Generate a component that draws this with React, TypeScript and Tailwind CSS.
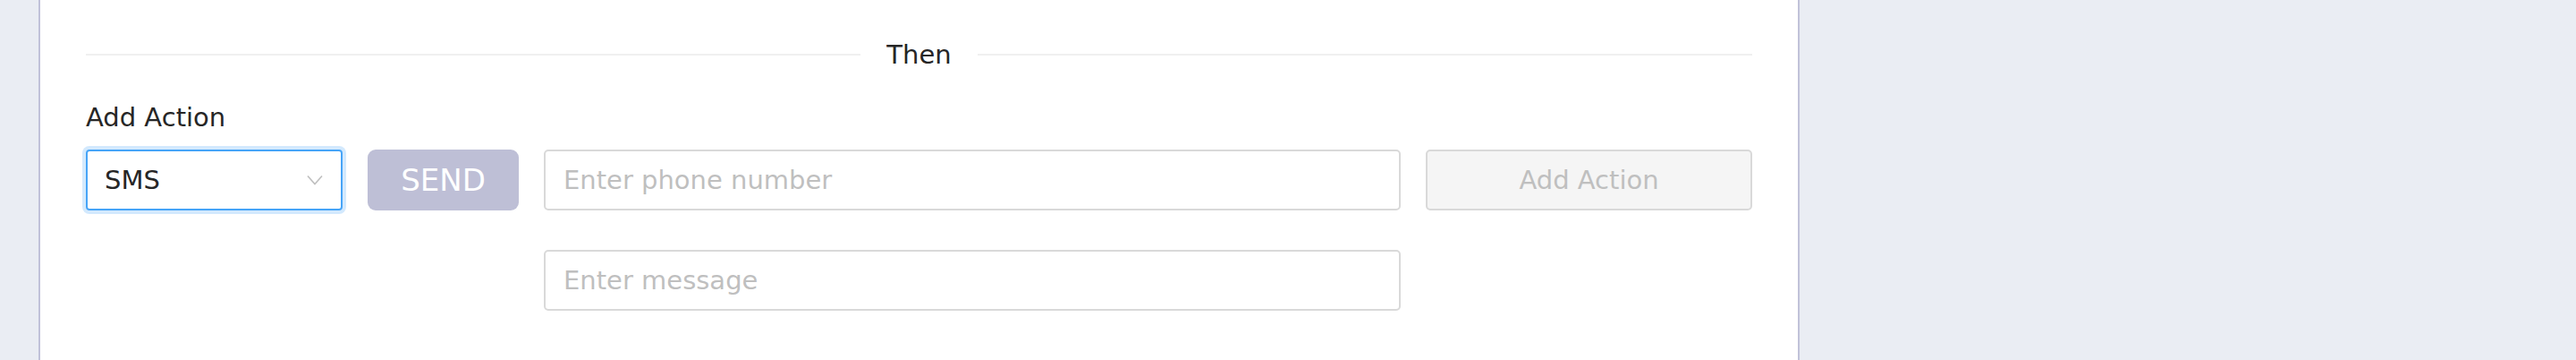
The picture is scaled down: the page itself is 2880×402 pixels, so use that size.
import { useState } from "react";

const font = { fontFamily: '"DejaVu Sans", "Liberation Sans", sans-serif' };

function Chevron() {
  return (
    <svg width="18" height="12" viewBox="0 0 18 12" fill="none">
      <path d="M1 1.5 L9 10.5 L17 1.5" stroke="#bfbfbf" strokeWidth="1.6" />
    </svg>
  );
}

export default function App() {
  const [phone, setPhone] = useState("");
  const [message, setMessage] = useState("");

  return (
    <div className="flex min-h-[402px] w-full bg-[#eaedf3]" style={font}>
      <div className="w-[43px] shrink-0" />

      <div className="w-[1969px] shrink-0 border-x-2 border-[#c1c2d9] bg-white px-[51px] pt-[39px] pb-[40px]">
        {/* divider */}
        <div className="flex h-[44px] items-center">
          <div className="h-[2px] flex-1 bg-[#f0f0f0]" />
          <span className="px-[29px] text-[29px] leading-none text-[#262626]">
            Then
          </span>
          <div className="h-[2px] flex-1 bg-[#f0f0f0]" />
        </div>

        <div className="mt-[34px] text-[29px] leading-[29px] text-[#262626]">
          Add Action
        </div>

        <div className="mt-[21px] grid grid-cols-[287px_169px_1fr_365px] gap-x-[28px] gap-y-[44px]">
          <div className="flex h-[68px] items-center justify-between rounded-[4px] border-2 border-[#46a4f7] pr-[20px] pl-[19px] shadow-[0_0_0_4px_#d3e9fd]">
            <span className="text-[29px] leading-none text-[#262626]">SMS</span>
            <Chevron />
          </div>

          <button className="flex h-[68px] items-center justify-center rounded-[9px] bg-[#bebfd6] text-[34px] leading-none text-white">
            SEND
          </button>

          <input
            value={phone}
            onChange={(e) => setPhone(e.target.value)}
            placeholder="Enter phone number"
            className="h-[68px] w-full rounded-[5px] border-2 border-[#d9d9d9] px-[20px] text-[29px] text-[#262626] outline-none placeholder:text-[#bfbfbf]"
          />

          <button className="flex h-[68px] items-center justify-center rounded-[5px] border-2 border-[#d9d9d9] bg-[#f5f5f5] text-[29px] leading-none text-[#bfbfbf]">
            Add Action
          </button>

          <input
            value={message}
            onChange={(e) => setMessage(e.target.value)}
            placeholder="Enter message"
            className="col-start-3 h-[68px] w-full rounded-[5px] border-2 border-[#d9d9d9] px-[20px] text-[29px] text-[#262626] outline-none placeholder:text-[#bfbfbf]"
          />
        </div>
      </div>

      <div className="flex-1" />
    </div>
  );
}
